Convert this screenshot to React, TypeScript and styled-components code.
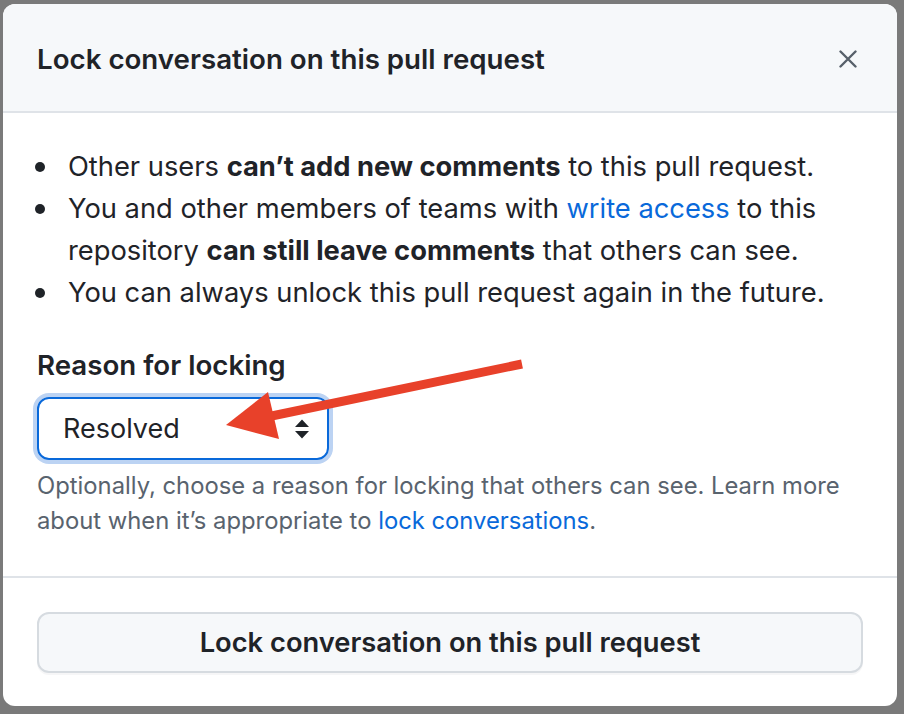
import React from "react";
import styled, { createGlobalStyle } from "styled-components";

const GlobalStyle = createGlobalStyle`
	html, body {
		margin: 0;
		padding: 0;
		background: #7a7a7a;
	}
	* {
		box-sizing: border-box;
	}
`;

const StyledPage = styled.div`
	position: relative;
	width: 904px;
	height: 714px;
	padding: 4px 7px 8px 3px;
	font-family: Inter, "Liberation Sans", sans-serif;
	color: #1f2328;
`;

const StyledDialog = styled.div`
	display: flex;
	flex-direction: column;
	width: 894px;
	height: 702px;
	background: #ffffff;
	border-radius: 12px;
	overflow: hidden;
`;

const StyledHeader = styled.div`
	display: flex;
	align-items: center;
	justify-content: space-between;
	height: 109px;
	padding: 2px 40px 0 34px;
	background: #f6f8fa;
	border-bottom: 2px solid #dfe3e8;
`;

const StyledTitle = styled.h2`
	margin: 0;
	font-size: 27.7px;
	font-weight: 600;
`;

const StyledCloseButton = styled.button`
	display: flex;
	padding: 0;
	border: 0;
	background: none;
	color: #57606a;
`;

const StyledBody = styled.div`
	padding: 33px 34px 38px;
	border-bottom: 2px solid #dfe3e8;
`;

const StyledList = styled.ul`
	margin: 0;
	padding: 0;
	list-style: none;
`;

const StyledItem = styled.li`
	display: flex;
	font-size: 27.3px;
	line-height: 42px;
`;

const StyledDot = styled.span`
	flex-shrink: 0;
	width: 10px;
	height: 10px;
	margin: 16px 23px 0 -2px;
	border-radius: 50%;
	background: #1f2328;
`;

const StyledLink = styled.a`
	color: #0969da;
	text-decoration: none;
`;

const StyledLabel = styled.div`
	margin-top: 30px;
	font-size: 27.7px;
	font-weight: 600;
	line-height: 42px;
`;

const StyledSelect = styled.div`
	display: flex;
	align-items: center;
	justify-content: space-between;
	width: 292px;
	height: 63px;
	margin-top: 11px;
	padding: 0 17px 0 24px;
	border: 2px solid #0969da;
	border-radius: 12px;
	box-shadow: 0 0 0 4px #bcd3f3;
	font-size: 27px;
`;

const StyledHelp = styled.p`
	margin: 8px 0 0;
	font-size: 23.8px;
	line-height: 35px;
	color: #59636e;
`;

const StyledFooter = styled.div`
	padding: 34px 34px 32px;
`;

const StyledButton = styled.button`
	display: flex;
	align-items: center;
	justify-content: center;
	width: 100%;
	height: 61px;
	border: 2px solid #d6dbe0;
	border-radius: 12px;
	background: #f6f8fa;
	box-shadow: 0 2px 0 rgba(31, 35, 40, 0.04);
	font-family: inherit;
	font-size: 27.3px;
	font-weight: 600;
	color: #1f2328;
`;

const StyledArrow = styled.svg`
	position: absolute;
	left: 0;
	top: 0;
	pointer-events: none;
`;

const App = () => {
	return (
		<>
			<GlobalStyle />
			<StyledPage>
				<StyledDialog>
					<StyledHeader>
						<StyledTitle>Lock conversation on this pull request</StyledTitle>
						<StyledCloseButton aria-label="Close">
							<svg width="18" height="18" viewBox="0 0 18 18">
								<path
									d="M1.5 1.5 L16.5 16.5 M16.5 1.5 L1.5 16.5"
									stroke="currentColor"
									strokeWidth="2.4"
									strokeLinecap="round"
								/>
							</svg>
						</StyledCloseButton>
					</StyledHeader>

					<StyledBody>
						<StyledList>
							<StyledItem>
								<StyledDot />
								<span>
									Other users <b>can’t add new comments</b> to this pull request.
								</span>
							</StyledItem>
							<StyledItem>
								<StyledDot />
								<span>
									You and other members of teams with{" "}
									<StyledLink href="#">write access</StyledLink> to this repository{" "}
									<b>can still leave comments</b> that others can see.
								</span>
							</StyledItem>
							<StyledItem>
								<StyledDot />
								<span>You can always unlock this pull request again in the future.</span>
							</StyledItem>
						</StyledList>

						<StyledLabel>Reason for locking</StyledLabel>
						<StyledSelect>
							<span>Resolved</span>
							<svg width="16" height="22" viewBox="0 0 16 22">
								<path d="M1 9 L8 1.5 L15 9 Z M1 13 L8 20.5 L15 13 Z" fill="#1f2328" />
							</svg>
						</StyledSelect>
						<StyledHelp>
							Optionally, choose a reason for locking that others can see. Learn more about
							when it’s appropriate to{" "}
							<StyledLink href="#">lock conversations</StyledLink>.
						</StyledHelp>
					</StyledBody>

					<StyledFooter>
						<StyledButton>Lock conversation on this pull request</StyledButton>
					</StyledFooter>
				</StyledDialog>

				<StyledArrow width="904" height="714" viewBox="0 0 904 714">
					<line x1="522" y1="364" x2="262" y2="418" stroke="#e8412a" strokeWidth="9" />
					<polygon points="226,425 268,392 279,439" fill="#e8412a" />
				</StyledArrow>
			</StyledPage>
		</>
	);
};

export default App;
